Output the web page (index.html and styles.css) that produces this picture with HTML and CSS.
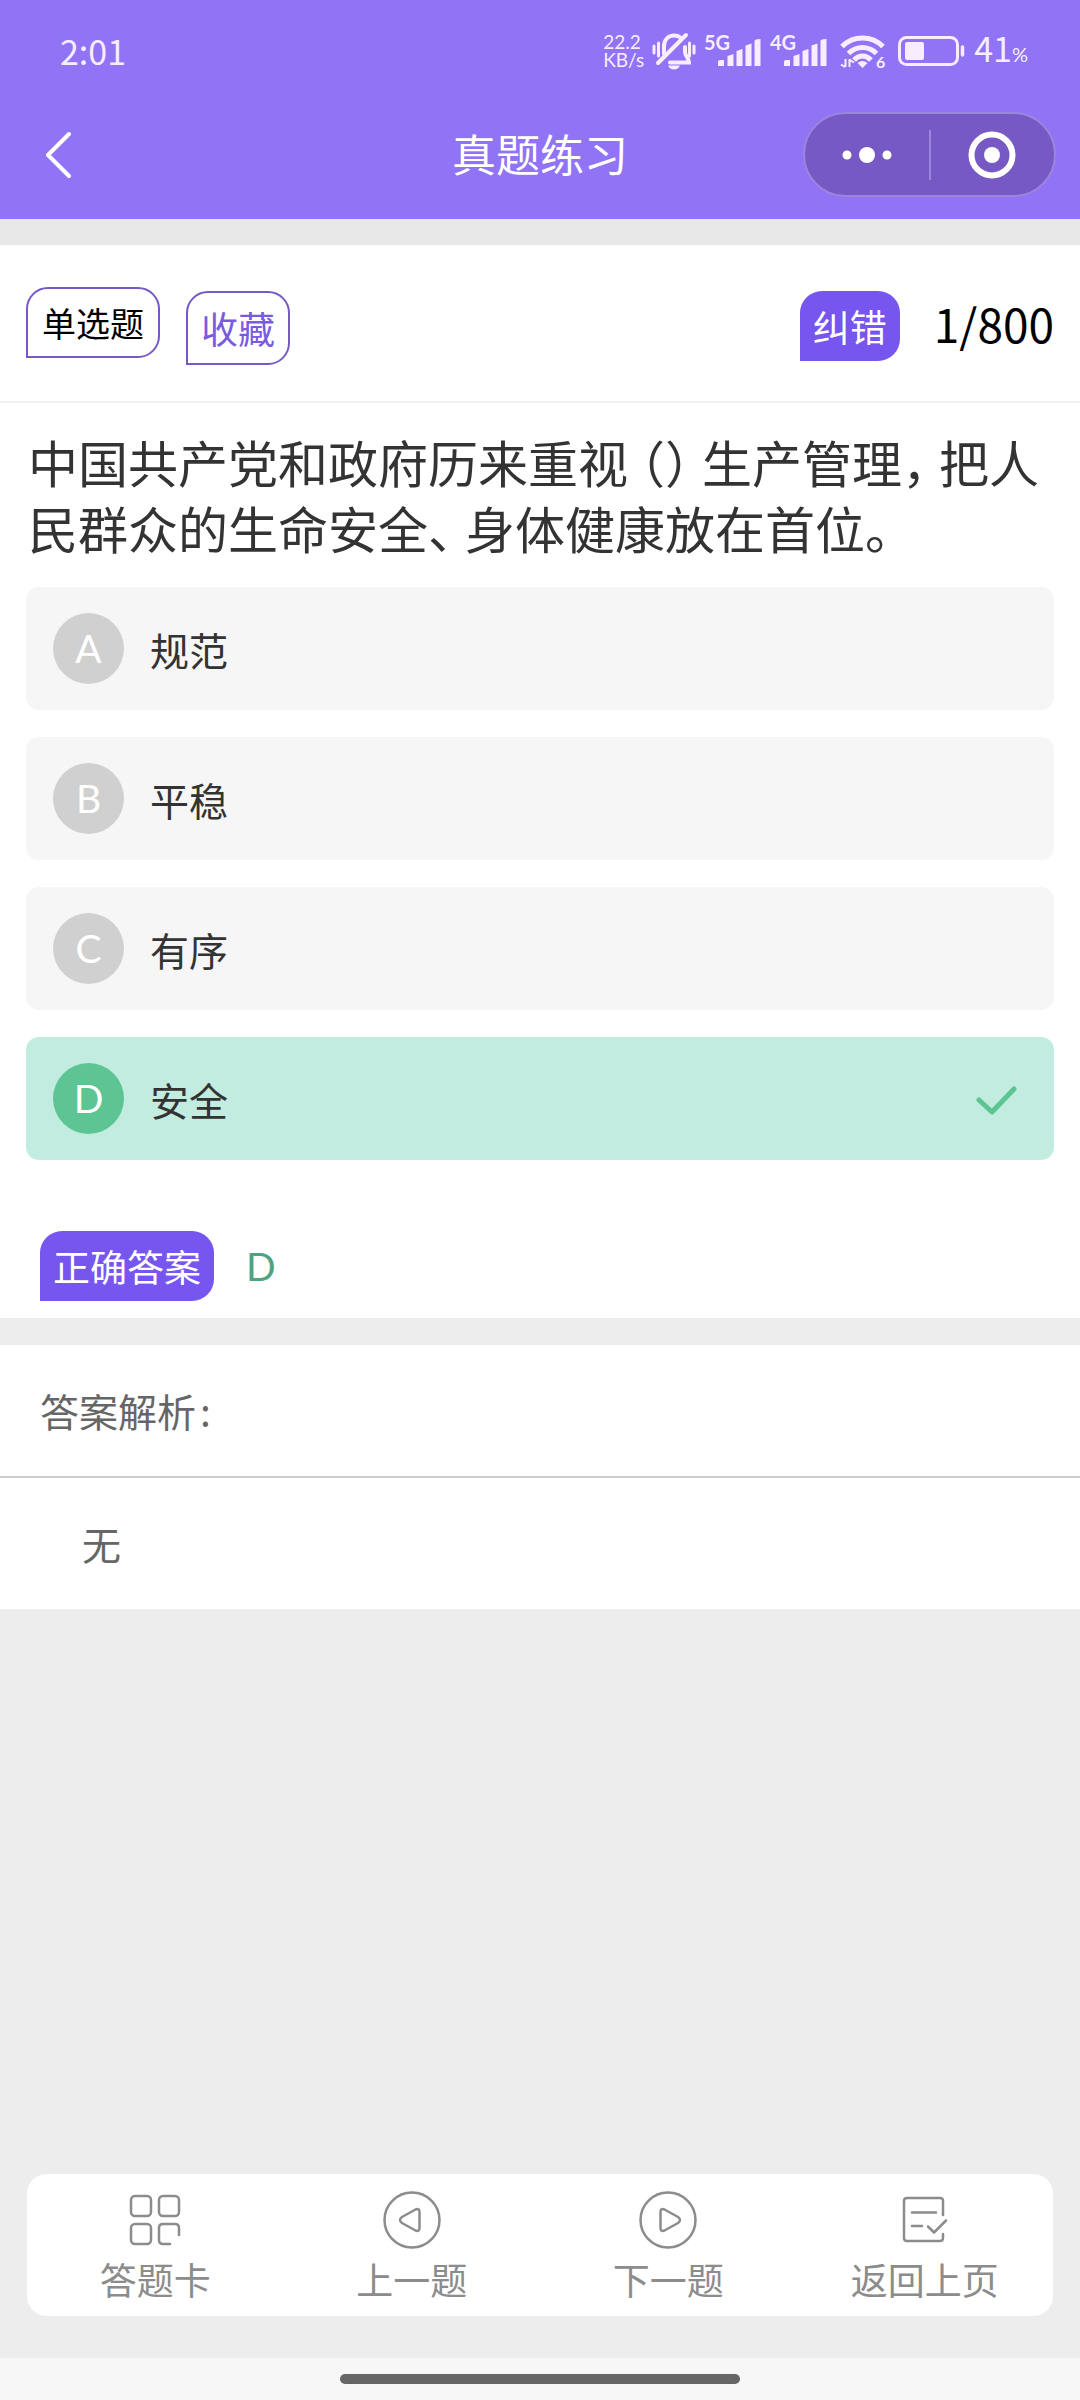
FILE: index.html
```html
<!DOCTYPE html>
<html lang="zh-CN">
<head>
<meta charset="utf-8">
<meta name="viewport" content="width=device-width, initial-scale=1">
<title>真题练习</title>
<link rel="stylesheet" href="styles.css">
</head>
<body>
<header class="header">
  <div class="status">
    <time class="clock">2:01</time>
    <div class="indicators">
      <div class="speed"><span>22.2</span><span>KB/s</span></div>
      <svg class="icon" width="44" height="38" viewBox="0 0 44 38" fill="none" stroke="currentColor" stroke-width="4" stroke-linecap="round" aria-hidden="true">
        <path d="M2 14v7M6.500 11v13M37.500 11v13M42 14v7" stroke-width="3"/>
        <path d="M12 22v-8C12 8 16 3.500 22 3.500c2.500 0 4.500.5 6.500 2M33 15v5c0 4 4 6 4 10.500H18"/>
        <path d="M6 31L34 3"/>
        <path d="M16 33.500h12c-1.500 3-3.500 4-6 4s-4.500-1-6-4z" fill="currentColor" stroke="none"/>
      </svg>
      <svg class="icon" width="58" height="44" viewBox="0 -5 58 44" fill="currentColor" aria-hidden="true">
        <text class="net" x="0" y="16">5G</text>
        <path d="M14 32v-4q0-2 2-2h4v6zM23.500 32V22l6-2v12zM32.500 32V17l6-2v17zM41.500 32V11.500l6-2V32zM50.500 32V7q0-2 6-2v27z"/>
      </svg>
      <svg class="icon" width="58" height="44" viewBox="0 -5 58 44" fill="currentColor" aria-hidden="true">
        <text class="net" x="0" y="16">4G</text>
        <path d="M14 32v-4q0-2 2-2h4v6zM23.500 32V22l6-2v12zM32.500 32V17l6-2v17zM41.500 32V11.500l6-2V32zM50.500 32V7q0-2 6-2v27z"/>
      </svg>
      <svg class="icon wifi" width="46" height="44" viewBox="0 -4 46 44" fill="none" stroke="currentColor" stroke-width="5" aria-hidden="true">
        <path d="M2 13.500C13 2 32 2 43 13.500M8.500 20.500c8-8 20-8 28 0M14 27c5-5.500 12-5.500 17 0"/>
        <path d="M17.500 30q5-4 10 0l-5 5z" fill="currentColor" stroke="none"/>
        <path d="M5.500 26v8M9.500 26v8M1 31.500l4 2.500M10 27l4 2.500" stroke-width="2"/>
        <text class="gen" x="36" y="35">6</text>
      </svg>
      <svg class="icon battery" width="68" height="30" viewBox="0 0 68 30" fill="none" stroke="currentColor" aria-hidden="true">
        <rect x="1.500" y="1.500" width="58" height="27" rx="7" stroke-width="3"/>
        <rect x="7" y="6" width="19" height="18" rx="2" fill="currentColor" stroke="none"/>
        <path d="M64.500 11v8" stroke-width="3.500" stroke-linecap="round"/>
      </svg>
      <div class="level">41<small>%</small></div>
    </div>
  </div>
  <nav class="nav">
    <button class="back" type="button" aria-label="返回">
      <svg width="26" height="48" viewBox="0 0 26 48" fill="none" stroke="currentColor" stroke-width="4" stroke-linecap="round" stroke-linejoin="round"><path d="M23 3L2 24l21 21"/></svg>
    </button>
    <h1 class="title">真题练习</h1>
    <div class="capsule">
      <button class="capsule-btn" type="button" aria-label="更多">
        <svg width="50" height="16" viewBox="0 0 50 16" fill="currentColor"><circle cx="5" cy="8" r="4.500"/><circle cx="25" cy="8" r="8"/><circle cx="45" cy="8" r="4.500"/></svg>
      </button>
      <button class="capsule-btn" type="button" aria-label="关闭">
        <svg width="48" height="48" viewBox="0 0 48 48"><circle cx="24" cy="24" r="20.500" fill="none" stroke="currentColor" stroke-width="6"/><circle cx="24" cy="24" r="8" fill="currentColor"/></svg>
      </button>
    </div>
  </nav>
</header>

<main class="main">
  <section class="card">
    <div class="meta">
      <span class="tag tag-type">单选题</span>
      <button class="tag tag-action tag-outline" type="button">收藏</button>
      <button class="tag tag-action tag-solid tag-report" type="button">纠错</button>
      <span class="count">1/800</span>
    </div>
    <h2 class="question">中国共产党和政府历来重视<span class="open">（</span><span class="close">）</span>生产管理<span class="close">，</span>把人民群众的生命安全<span class="close">、</span>身体健康放在首位。</h2>
    <div class="options">
      <button class="option" type="button"><span class="letter">A</span>规范</button>
      <button class="option" type="button"><span class="letter">B</span>平稳</button>
      <button class="option" type="button"><span class="letter">C</span>有序</button>
      <button class="option correct" type="button"><span class="letter">D</span>安全
        <svg class="check" width="42" height="32" viewBox="0 0 42 32" fill="none" stroke="currentColor" stroke-width="5" stroke-linecap="round" stroke-linejoin="round" aria-hidden="true"><path d="M3 17l13 12L38 6"/></svg>
      </button>
    </div>
    <div class="answer">
      <span class="tag tag-solid">正确答案</span>
      <span class="answer-value">D</span>
    </div>
  </section>

  <section class="card analysis">
    <h3 class="analysis-title">答案解析<span class="colon">:</span></h3>
    <p class="analysis-text">无</p>
  </section>
</main>

<footer class="footer">
  <nav class="tabs">
    <button class="tab" type="button">
      <svg width="58" height="58" viewBox="0 0 58 58" fill="none" stroke="currentColor" stroke-width="2.500" stroke-linecap="round" stroke-linejoin="round"><rect x="5" y="5" width="20" height="20" rx="4"/><rect x="33" y="5" width="20" height="20" rx="4"/><rect x="5" y="33" width="20" height="20" rx="4"/><path d="M53 44v-7q0-4-4-4H37q-4 0-4 4v12q0 4 4 4h7"/></svg>
      答题卡
    </button>
    <button class="tab" type="button">
      <svg width="58" height="58" viewBox="0 0 58 58" fill="none" stroke="currentColor" stroke-width="2.500" stroke-linejoin="round"><circle cx="29" cy="29" r="27.500"/><path d="M36.500 21v16q0 4-4 2.500L19 32q-4-3 0-6l13.500-7.500q4-1.500 4 2.500z"/></svg>
      上一题
    </button>
    <button class="tab" type="button">
      <svg width="58" height="58" viewBox="0 0 58 58" fill="none" stroke="currentColor" stroke-width="2.500" stroke-linejoin="round"><circle cx="29" cy="29" r="27.500"/><path d="M21.500 21v16q0 4 4 2.500L39 32q4-3 0-6l-13.500-7.500q-4-1.500-4 2.500z"/></svg>
      下一题
    </button>
    <button class="tab" type="button">
      <svg width="58" height="58" viewBox="0 0 58 58" fill="none" stroke="currentColor" stroke-width="2.500" stroke-linecap="round" stroke-linejoin="round"><path d="M47 24V10q0-3-3-3H11q-3 0-3 3v37q0 3 3 3h33q3 0 3-3v-4M16 21.500h24M16 35h10M32 35.500l6 6L50 29.500"/></svg>
      返回上页
    </button>
  </nav>
  <div class="home"><div class="home-bar"></div></div>
</footer>
</body>
</html>
```
FILE: styles.css
```css
* {
  box-sizing: border-box;
}

body {
  margin: 0;
  min-height: 100vh;
  display: flex;
  flex-direction: column;
  background: #ededed;
  color: #333;
  font-family: "Noto Sans CJK SC", sans-serif;
}

button {
  margin: 0;
  padding: 0;
  border: 0;
  background: none;
  color: inherit;
  font: inherit;
}

svg {
  display: block;
  flex: none;
}

h1, h2, h3, p {
  margin: 0;
  font-weight: 400;
}

/* Header */
.header {
  background: #9173f5;
  color: #fff;
}

.status {
  display: flex;
  justify-content: space-between;
  align-items: center;
  height: 102px;
  padding: 0 52px 0 60px;
  color: #f6edff;
}

.clock,
.level {
  font-size: 34px;
  line-height: 50px;
}

.indicators {
  display: flex;
  align-items: center;
  gap: 8px;
}

.speed {
  display: flex;
  flex-direction: column;
  font-family: Lato, sans-serif;
  font-size: 19px;
  line-height: 18px;
}

.net {
  font-family: Lato, sans-serif;
  font-size: 20px;
  font-weight: 700;
}

.gen {
  font-family: Lato, sans-serif;
  font-size: 16px;
  font-weight: 700;
  stroke: none;
  fill: currentColor;
}

.wifi {
  margin: 0 4px;
}

.level small {
  font-family: Lato, sans-serif;
  font-size: 20px;
}

.nav {
  display: grid;
  grid-template-columns: 1fr auto 1fr;
  align-items: center;
  padding: 10px 24px 22px 46px;
}

.back {
  justify-self: start;
}

.title {
  font-size: 44px;
  line-height: 60px;
  margin: 0 22px 4px 0;
}

.capsule {
  justify-self: end;
  display: flex;
  align-items: center;
  width: 253px;
  height: 85px;
  border: 2px solid #9b86dc;
  border-radius: 43px;
  background: #7659c4;
}

.capsule-btn {
  flex: 1;
  display: flex;
  justify-content: center;
  align-items: center;
  height: 50px;
}

.capsule-btn + .capsule-btn {
  border-left: 2px solid #9b86dc;
}

/* Question */
.main {
  flex: 1;
  padding-top: 26px;
  background: linear-gradient(#e7e7e7 26px, #ededed 26px);
}

.card {
  background: #fff;
}

.meta {
  display: flex;
  align-items: flex-start;
  height: 158px;
  padding: 42px 26px 0;
  border-bottom: 2px solid #f1f1f1;
  color: #000;
}

.tag {
  padding: 0 13px;
  border-radius: 22px 22px 22px 0;
  font-size: 37px;
  line-height: 70px;
}

.tag-type,
.tag-outline {
  border: 2px solid #7659c4;
}

.tag-type {
  padding: 0 14px;
  font-size: 34px;
  line-height: 67px;
}

.tag-action {
  margin-top: 4px;
}

.tag-outline {
  margin-left: 26px;
  color: #7a5be0;
}

.tag-solid {
  background: #7755ef;
  color: #fff;
}

.tag-report {
  margin-left: auto;
}

.count {
  margin-left: 34px;
  font-size: 46px;
  line-height: 72px;
}

.question {
  padding: 25px 26px 27px 28px;
  font-size: 50px;
  line-height: 66px;
}

/* Punctuation set three quarters of an em wide */
.open,
.close {
  font-feature-settings: "halt";
}

.open {
  margin-left: 12px;
}

.close {
  margin-right: 12px;
}

.options {
  display: flex;
  flex-direction: column;
  gap: 27px;
  padding: 0 26px;
}

.option {
  display: flex;
  align-items: center;
  gap: 26px;
  height: 123px;
  padding: 0 36px 0 27px;
  border-radius: 13px;
  background: #f6f6f6;
  font-size: 39px;
  line-height: 54px;
}

.letter {
  width: 71px;
  border-radius: 50%;
  background: #d0d0d0;
  color: #fff;
  font-family: Lato, sans-serif;
  line-height: 71px;
  text-align: center;
}

.correct {
  background: #c1ecdf;
}

.correct .letter {
  background: #5cc593;
}

.check {
  margin-left: auto;
  color: #5cc593;
}

.answer {
  display: flex;
  align-items: center;
  gap: 32px;
  padding: 71px 40px 17px;
}

.answer-value {
  color: #4fa383;
  font-family: Lato, sans-serif;
  font-size: 39px;
}

/* Explanation */
.analysis {
  margin-top: 27px;
  color: #666;
}

.analysis-title,
.analysis-text {
  font-size: 39px;
  line-height: 131px;
}

.analysis-title {
  padding: 0 40px;
  border-bottom: 2px solid #ccc;
}

.colon {
  margin-left: 4px;
}

.analysis-text {
  padding: 0 82px;
}

/* Bottom bar */
.tabs {
  display: flex;
  margin: 0 27px 42px;
  padding: 17px 0 10px;
  border-radius: 20px;
  background: #fff;
  color: #8c8c8c;
}

.tab {
  flex: 1;
  display: flex;
  flex-direction: column;
  align-items: center;
  gap: 3px;
  font-size: 37px;
  line-height: 54px;
}

.home {
  display: flex;
  justify-content: center;
  padding: 16px 0;
  background: #f7f7f7;
}

.home-bar {
  width: 37%;
  height: 10px;
  border-radius: 5px;
  background: #666;
}
```
